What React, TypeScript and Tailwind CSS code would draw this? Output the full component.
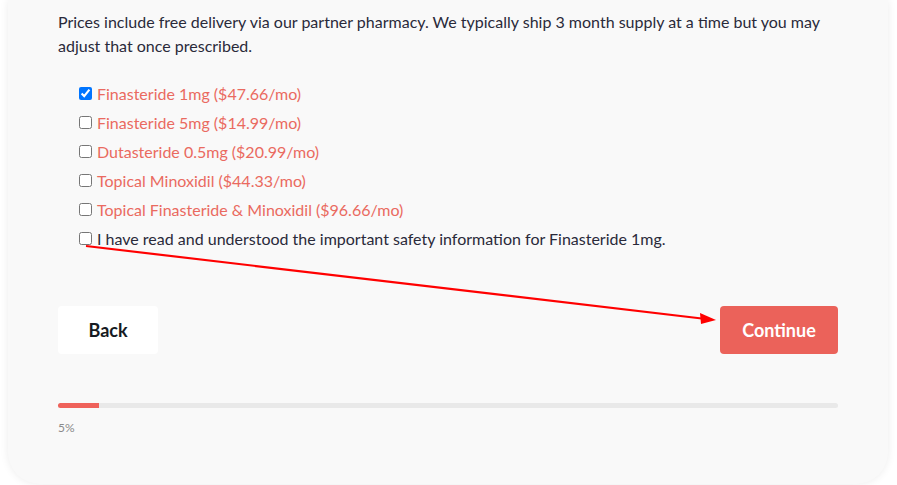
import React from "react";

const items = [
  { label: "Finasteride 1mg ($47.66/mo)", checked: true },
  { label: "Finasteride 5mg ($14.99/mo)", checked: false },
  { label: "Dutasteride 0.5mg ($20.99/mo)", checked: false },
  { label: "Topical Minoxidil ($44.33/mo)", checked: false },
  { label: "Topical Finasteride & Minoxidil ($96.66/mo)", checked: false },
];

export default function App() {
  return (
    <div className="relative w-[897px] h-[485px] overflow-hidden bg-white" style={{ fontFamily: "Lato, 'Open Sans', sans-serif" }}>
      <div className="ml-2 w-[880px] h-[484px] bg-[#f9f9f9] rounded-b-[32px] shadow-[0_0_8px_rgba(0,0,0,0.08)] px-[50px] pt-[10px]">
        <p className="text-[16px] leading-6 text-[#2a2a3a]">
          Prices include free delivery via our partner pharmacy. We typically ship 3 month supply at a time but you may adjust that once prescribed.
        </p>
        <div className="mt-[21px] pl-[21px] flex flex-col">
          {items.map((it) => (
            <label key={it.label} className="flex items-center h-[29px] text-[16px] text-[#ea6a60]">
              <input type="checkbox" defaultChecked={it.checked} className="m-0 w-[13px] h-[13px] mr-[5px]" />
              <span>{it.label}</span>
            </label>
          ))}
          <label className="flex items-center h-[29px] text-[16px] text-[#2a2a3a]">
            <input type="checkbox" className="m-0 w-[13px] h-[13px] mr-[5px]" />
            <span>I have read and understood the important safety information for Finasteride 1mg.</span>
          </label>
        </div>
        <div className="mt-[53px] flex justify-between">
          <button className="w-[100px] h-[48px] bg-white rounded text-[18px] font-bold text-[#161a22]">Back</button>
          <button className="w-[118px] h-[48px] bg-[#eb625a] rounded text-[18px] font-bold text-white">Continue</button>
        </div>
        <div className="mt-[49px] h-[5px] rounded-full bg-[#e9e9e9]">
          <div className="h-full w-[41px] rounded-l-full bg-[#ef625b]" />
        </div>
        <div className="mt-[12px] text-[12px] leading-4 text-[#8a8a8a]">5%</div>
      </div>
      <svg className="absolute left-0 top-0 pointer-events-none" width="897" height="485">
        <line x1="86" y1="246" x2="706" y2="319" stroke="#ff0000" strokeWidth="2.2" />
        <polygon points="716,320 700,313 701,324" fill="#ff0000" />
      </svg>
    </div>
  );
}
